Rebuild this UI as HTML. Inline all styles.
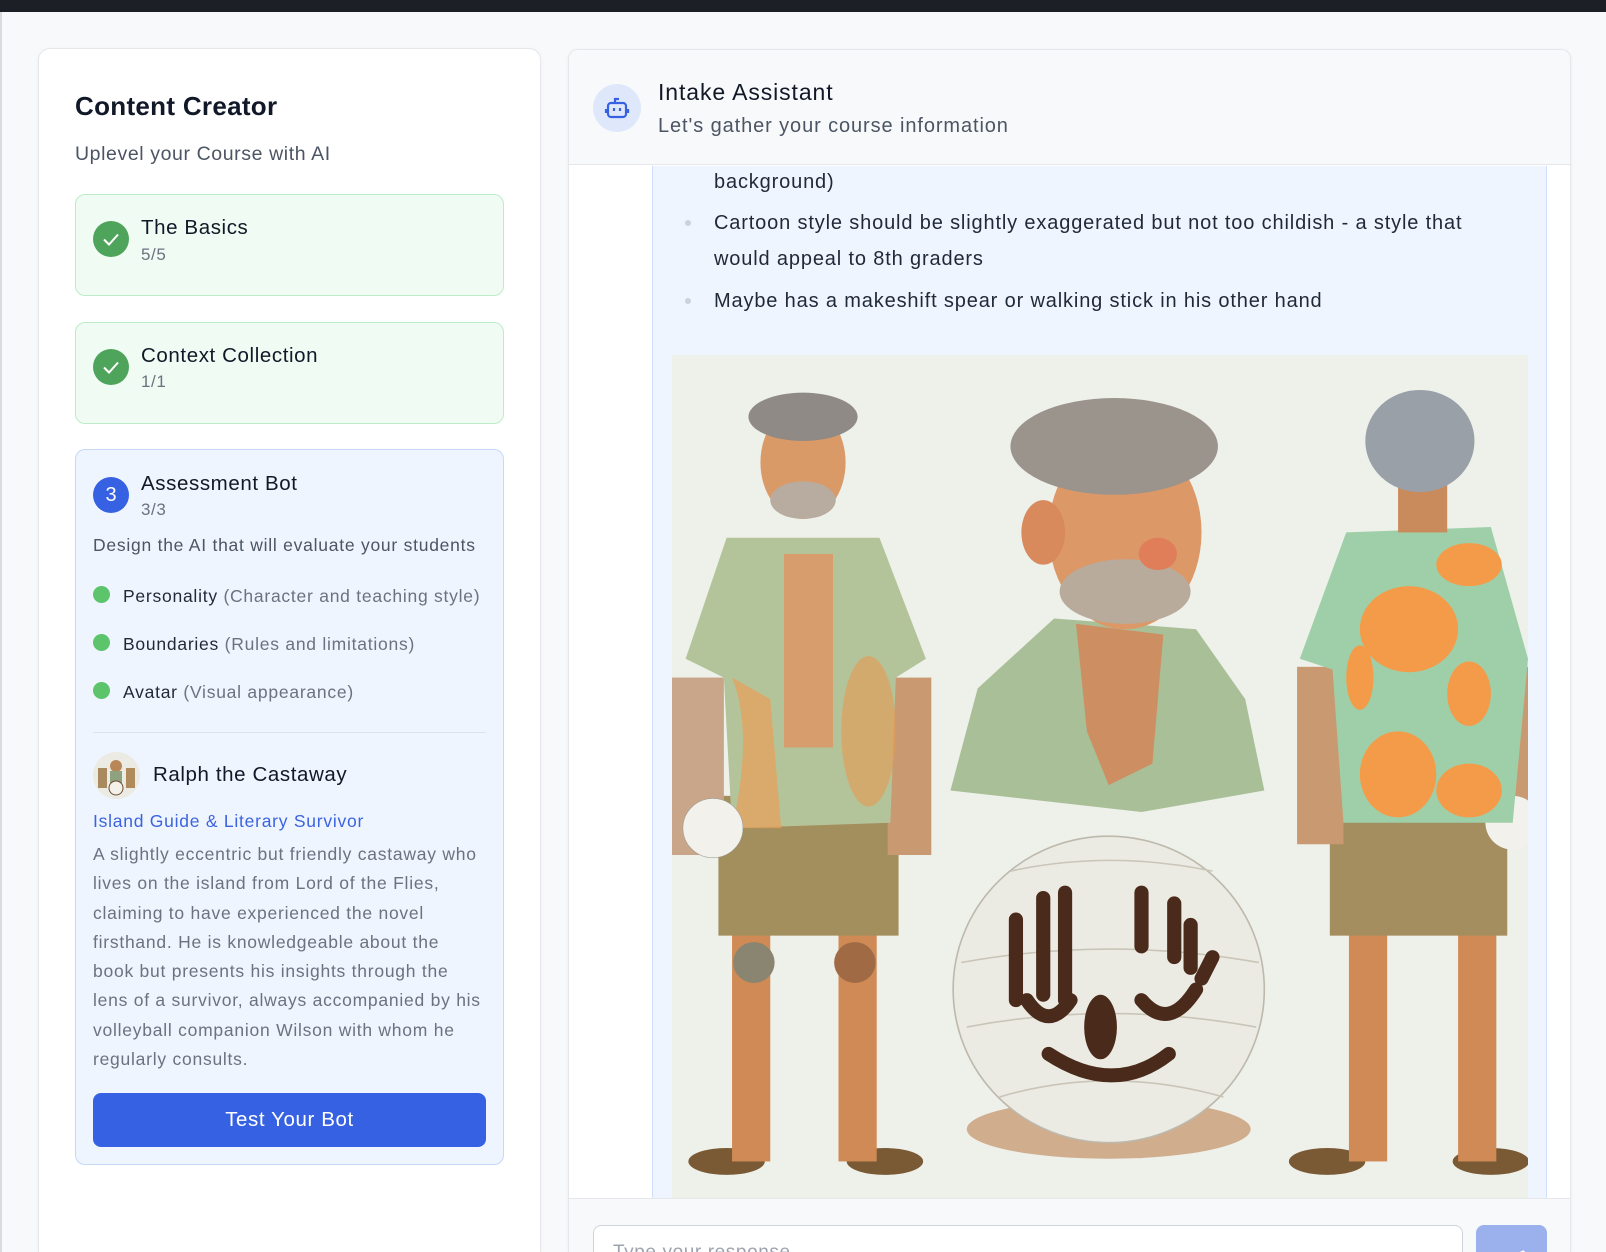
<!DOCTYPE html>
<html style="width:1606px;height:1252px;overflow:hidden"><head><meta charset="utf-8"><style>
*{box-sizing:border-box;margin:0;padding:0}
body{width:1606px;height:1252px;overflow:hidden;background:#f8f9fa;font-family:"Liberation Sans",sans-serif;position:relative;color:#111827;letter-spacing:0.6px}
.abs{position:absolute}
.topbar{left:0;top:0;width:1606px;height:12px;background:#1c1f25}
.leftedge{left:0;top:12px;width:2px;height:1240px;background:#d9dbe0}
.lcard{left:38px;top:48px;width:503px;height:1204px;background:#fff;border:1px solid #e5e7eb;border-bottom:none;border-radius:12px 12px 0 0;box-shadow:0 1px 4px rgba(0,0,0,.04)}
.t{position:absolute;white-space:nowrap;line-height:1}
.step{position:absolute;left:75px;width:429px;border-radius:10px}
.green{background:#f0fbf3;border:1px solid #bdeccb}
.blue{background:#eff5fe;border:1px solid #c5d8f6}
.circ{position:absolute;width:36px;height:36px;border-radius:50%;background:#4fa45c}
.dot{position:absolute;width:17px;height:17px;border-radius:50%;background:#5cc46a;left:93px}
.rcard{left:568px;top:49px;width:1003px;height:1203px;background:#fff;border:1px solid #e5e7eb;border-bottom:none;border-radius:10px 10px 0 0;overflow:hidden;box-shadow:0 1px 4px rgba(0,0,0,.05)}
.chat{letter-spacing:0.85px}
</style></head><body>
<div class="abs topbar"></div>
<div class="abs leftedge"></div>
<div class="abs lcard"></div>
<div class="t" style="left:75px;top:93px;font-size:26px;font-weight:bold;color:#111827;letter-spacing:0.3px">Content Creator</div>
<div class="t" style="left:75px;top:145px;font-size:19.5px;color:#4b5563">Uplevel your Course with AI</div>

<div class="step green" style="top:194px;height:102px"></div>
<div class="circ" style="left:93px;top:221px"><svg width="36" height="36"><path d="M11 18.5l5 5 9-10" fill="none" stroke="#fff" stroke-width="2"/></svg></div>
<div class="t" style="left:141px;top:218px;font-size:20.5px">The Basics</div>
<div class="t" style="left:141px;top:246px;font-size:17px;color:#6b7280">5/5</div>

<div class="step green" style="top:322px;height:102px"></div>
<div class="circ" style="left:93px;top:349px"><svg width="36" height="36"><path d="M11 18.5l5 5 9-10" fill="none" stroke="#fff" stroke-width="2"/></svg></div>
<div class="t" style="left:141px;top:346px;font-size:20.5px">Context Collection</div>
<div class="t" style="left:141px;top:373px;font-size:17px;color:#6b7280">1/1</div>

<div class="step blue" style="top:449px;height:716px"></div>
<div class="circ" style="left:93px;top:477px;background:#3661e3;color:#fff;font-size:20px;text-align:center;line-height:36px;letter-spacing:0">3</div>
<div class="t" style="left:141px;top:474px;font-size:20.5px">Assessment Bot</div>
<div class="t" style="left:141px;top:501px;font-size:17px;color:#6b7280">3/3</div>
<div class="t" style="left:93px;top:537px;font-size:17.5px;color:#4b5563;letter-spacing:0.75px">Design the AI that will evaluate your students</div>
<div class="dot" style="top:586px"></div>
<div class="t" style="left:123px;top:588px;font-size:17.5px;color:#1f2937;letter-spacing:0.75px">Personality <span style="color:#6b7280">(Character and teaching style)</span></div>
<div class="dot" style="top:634px"></div>
<div class="t" style="left:123px;top:636px;font-size:17.5px;color:#1f2937;letter-spacing:0.75px">Boundaries <span style="color:#6b7280">(Rules and limitations)</span></div>
<div class="dot" style="top:682px"></div>
<div class="t" style="left:123px;top:684px;font-size:17.5px;color:#1f2937;letter-spacing:0.75px">Avatar <span style="color:#6b7280">(Visual appearance)</span></div>
<div class="abs" style="left:93px;top:732px;width:393px;height:1px;background:#dde3ea"></div>
<div class="abs" style="left:93px;top:752px;width:47px;height:47px;border-radius:50%;background:#ecebe3;overflow:hidden">
<svg width="47" height="47"><circle cx="23" cy="14" r="6" fill="#b98658"/><rect x="17" y="19" width="12" height="12" fill="#8fa27f"/><rect x="5" y="16" width="9" height="20" fill="#a88a5e"/><rect x="33" y="16" width="9" height="20" fill="#b18a5c"/><circle cx="23" cy="36" r="7" fill="#f3f1ea" stroke="#6b4a30"/></svg></div>
<div class="t" style="left:153px;top:765px;font-size:20.5px">Ralph the Castaway</div>
<div class="t" style="left:93px;top:813px;font-size:17.5px;color:#3b63e0;letter-spacing:0.75px">Island Guide &amp; Literary Survivor</div>
<div class="abs" style="left:93px;top:840px;width:420px;font-size:17.5px;line-height:29.3px;color:#6b7280;white-space:nowrap;letter-spacing:0.75px">A slightly eccentric but friendly castaway who<br>lives on the island from Lord of the Flies,<br>claiming to have experienced the novel<br>firsthand. He is knowledgeable about the<br>book but presents his insights through the<br>lens of a survivor, always accompanied by his<br>volleyball companion Wilson with whom he<br>regularly consults.</div>
<div class="abs" style="left:93px;top:1093px;width:393px;height:54px;background:#3661e3;border-radius:8px;color:#fff;font-size:20.5px;text-align:center;line-height:54px">Test Your Bot</div>

<div class="abs rcard">
 <div class="abs" style="left:0;top:0;width:1003px;height:115px;background:#f8f9fb;border-bottom:1px solid #e5e7eb"></div>
 <div class="abs" style="left:24px;top:34px;width:48px;height:48px;border-radius:50%;background:#dfe8fb">
  <svg width="48" height="48" fill="none" stroke="#3661e3" stroke-width="2.2"><rect x="15" y="19" width="18" height="14" rx="3"/><path d="M22 19v-4h4M13 25v4M35 25v4M21 24v3M27 24v3"/></svg></div>
 <div class="t" style="left:89px;top:31px;font-size:23px;color:#111827;letter-spacing:0.9px">Intake Assistant</div>
 <div class="t" style="left:89px;top:66px;font-size:20px;color:#4b5563;letter-spacing:0.9px">Let's gather your course information</div>
 <div class="abs" style="left:83px;top:116px;width:895px;height:1033px;background:#eff5fe;border-left:1px solid #cfe0fa;border-right:1px solid #cfe0fa"></div>
 <div class="t chat" style="left:145px;top:122px;font-size:20px;color:#1f2937">background)</div>
 <div class="abs" style="left:116px;top:170px;width:6px;height:6px;border-radius:50%;background:#cbd2da"></div>
 <div class="t chat" style="left:145px;top:163px;font-size:20px;color:#1f2937">Cartoon style should be slightly exaggerated but not too childish - a style that</div>
 <div class="t chat" style="left:145px;top:199px;font-size:20px;color:#1f2937">would appeal to 8th graders</div>
 <div class="abs" style="left:116px;top:248px;width:6px;height:6px;border-radius:50%;background:#cbd2da"></div>
 <div class="t chat" style="left:145px;top:241px;font-size:20px;color:#1f2937">Maybe has a makeshift spear or walking stick in his other hand</div>
 <svg class="abs" style="left:103px;top:305px" width="856" height="843" viewBox="0 0 1568 1568" preserveAspectRatio="none">
  <rect width="1568" height="1568" fill="#eef0ea"/>
  <ellipse cx="100" cy="1500" rx="70" ry="25" fill="#7a5a35"/><ellipse cx="390" cy="1500" rx="70" ry="25" fill="#7a5a35"/>
  <rect x="110" y="1060" width="70" height="440" fill="#cf8a55"/><rect x="305" y="1060" width="70" height="440" fill="#cf8a55"/>
  <circle cx="150" cy="1130" r="38" fill="#8a8570"/><circle cx="335" cy="1130" r="38" fill="#a06a45"/>
  <rect x="85" y="820" width="330" height="260" fill="#a38f5e"/>
  <rect x="0" y="600" width="95" height="330" fill="#c9a68a"/><rect x="395" y="600" width="80" height="330" fill="#c99a72"/>
  <polygon points="100,340 380,340 465,565 410,600 400,870 110,880 95,600 25,565" fill="#b4c49a"/>
  <path d="M110 600 Q150 700 110 880 L200 880 L180 640Z" fill="#e8a058" opacity=".7"/><ellipse cx="360" cy="700" rx="50" ry="140" fill="#e89a50" opacity=".6"/>
  <rect x="205" y="370" width="90" height="360" fill="#d79d6c"/>
  <circle cx="75" cy="880" r="55" fill="#f2f1ec" stroke="#9a9a90"/>
  <ellipse cx="240" cy="200" rx="78" ry="105" fill="#d99a68"/><ellipse cx="240" cy="270" rx="60" ry="35" fill="#b8aca0"/>
  <ellipse cx="240" cy="115" rx="100" ry="45" fill="#8f8a86"/>
  <polygon points="510,810 560,620 700,490 960,510 1050,640 1085,810 860,850" fill="#a9bf98"/>
  <polygon points="740,500 900,520 880,760 800,800 760,700" fill="#cd8e62"/>
  <ellipse cx="830" cy="330" rx="140" ry="180" fill="#dc9866"/><ellipse cx="680" cy="330" rx="40" ry="60" fill="#d88a5c"/>
  <ellipse cx="830" cy="440" rx="120" ry="60" fill="#b9ab9c"/><ellipse cx="890" cy="370" rx="35" ry="30" fill="#e07e5a"/>
  <ellipse cx="810" cy="170" rx="190" ry="90" fill="#9a948c"/>
  <ellipse cx="800" cy="1440" rx="260" ry="55" fill="#b06a30" opacity=".5"/>
  <circle cx="800" cy="1180" r="285" fill="#ecebe3" stroke="#bdb9ad" stroke-width="3"/>
  <g stroke="#c9c5b8" stroke-width="3" fill="none"><path d="M530 1130 Q800 1080 1075 1130"/><path d="M540 1250 Q800 1200 1070 1250"/><path d="M600 1380 Q800 1320 1010 1380"/><path d="M620 960 Q800 920 990 960"/></g>
  <g stroke="#4a2a1a" stroke-width="26" fill="none" stroke-linecap="round"><path d="M630 1050v150M680 1010v180M720 1000v200M650 1200q40 60 80 0"/><path d="M860 1000v100M920 1020v100M950 1060v80M990 1120l-20 40M860 1200q50 60 100 -20"/><path d="M690 1300q120 80 220 0"/></g>
  <ellipse cx="785" cy="1250" rx="30" ry="60" fill="#4a2a1a"/>
  <ellipse cx="1200" cy="1500" rx="70" ry="25" fill="#7a5a35"/><ellipse cx="1500" cy="1500" rx="70" ry="25" fill="#7a5a35"/>
  <rect x="1240" y="1060" width="70" height="440" fill="#cf8a55"/><rect x="1440" y="1060" width="70" height="440" fill="#cf8a55"/>
  <rect x="1205" y="850" width="325" height="230" fill="#a48d5e"/>
  <rect x="1145" y="580" width="85" height="330" fill="#c99a72"/><rect x="1510" y="580" width="58" height="330" fill="#c99a72"/>
  <circle cx="1540" cy="870" r="50" fill="#f2f1ec"/>
  <polygon points="1150,565 1235,330 1500,320 1568,565 1540,870 1230,870 1210,585" fill="#9fcfa8"/>
  <g fill="#f49b4a"><ellipse cx="1350" cy="510" rx="90" ry="80"/><ellipse cx="1460" cy="390" rx="60" ry="40"/><ellipse cx="1330" cy="780" rx="70" ry="80"/><ellipse cx="1460" cy="630" rx="40" ry="60"/><ellipse cx="1460" cy="810" rx="60" ry="50"/><ellipse cx="1260" cy="600" rx="25" ry="60"/></g>
  <rect x="1330" y="230" width="90" height="100" fill="#c98a5c"/>
  <ellipse cx="1370" cy="160" rx="100" ry="95" fill="#9aa0a8"/>
 </svg>
 <div class="abs" style="left:0;top:1148px;width:1003px;height:55px;background:#f8f9fb;border-top:1px solid #e5e7eb;overflow:hidden">
  <div class="abs" style="left:24px;top:26px;width:870px;height:60px;background:#fff;border:1px solid #d1d5db;border-radius:8px"></div>
  <div class="t" style="left:44px;top:44px;font-size:19px;color:#9ca3af">Type your response...</div>
  <div class="abs" style="left:907px;top:26px;width:71px;height:60px;background:#9ab1ee;border-radius:8px">
   <svg width="71" height="60" fill="none" stroke="#fff" stroke-width="2"><path d="M24 38l24-12-20 18zM48 26l-8 22"/></svg></div>
 </div>
</div>
</body></html>
